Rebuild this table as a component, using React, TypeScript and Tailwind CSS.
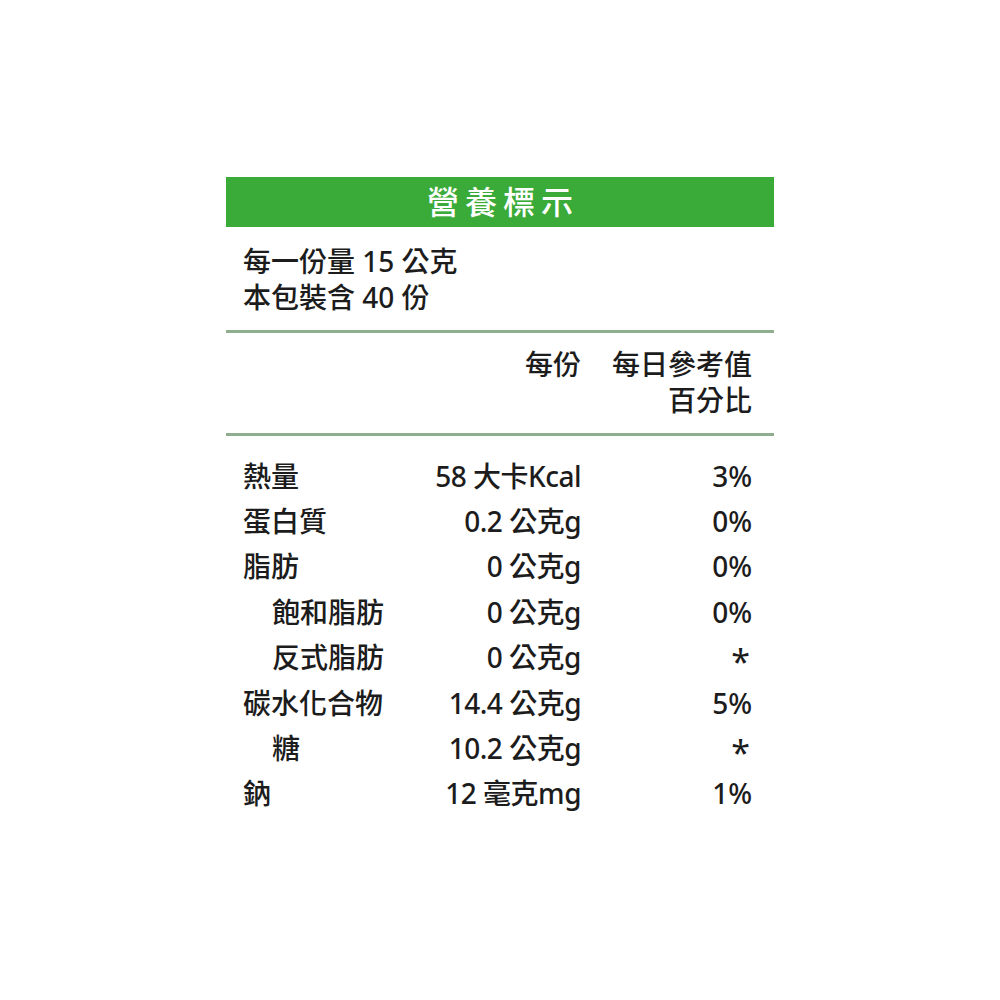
const rows = [
  { label: "熱量", value: "58 大卡Kcal", pct: "3%", indent: false },
  { label: "蛋白質", value: "0.2 公克g", pct: "0%", indent: false },
  { label: "脂肪", value: "0 公克g", pct: "0%", indent: false },
  { label: "飽和脂肪", value: "0 公克g", pct: "0%", indent: true },
  { label: "反式脂肪", value: "0 公克g", pct: "*", indent: true },
  { label: "碳水化合物", value: "14.4 公克g", pct: "5%", indent: false },
  { label: "糖", value: "10.2 公克g", pct: "*", indent: true },
  { label: "鈉", value: "12 毫克mg", pct: "1%", indent: false },
];

export default function App() {
  return (
    <div
      className="min-h-[1000px] w-full bg-white pt-[177px] text-[#1c1c1c]"
      style={{ fontFamily: '"Noto Sans", "Noto Sans CJK TC", sans-serif' }}
    >
      <div className="w-[548px] ml-[226px]">
        <div className="flex h-[50px] items-center justify-center bg-[#3aaa38] text-[32px] font-medium tracking-[6px] text-white pl-[6px]">
          營養標示
        </div>

        <div className="px-[17px] pt-[16px] pb-[15px] text-[28px] leading-[36px] font-medium">
          <div>每一份量 15 公克</div>
          <div>本包裝含 40 份</div>
        </div>
        <div className="h-[3px] bg-[#8fae8f]" />

        <div className="grid grid-cols-[170px_168px_171px] pl-[17px] pt-[13px] pb-[15px] text-[28px] leading-[36px] font-medium">
          <div />
          <div className="text-right">每份</div>
          <div className="text-right">
            每日參考值
            <br />
            百分比
          </div>
        </div>
        <div className="h-[3px] bg-[#8fae8f]" />

        <div className="pl-[17px] pt-[17px] pb-[10px] text-[28px] font-medium">
          {rows.map((r) => (
            <div
              key={r.label}
              className="grid h-[45.4px] grid-cols-[170px_168px_171px] items-center"
            >
              <div className={r.indent ? "pl-[29px] whitespace-nowrap" : "whitespace-nowrap"}>{r.label}</div>
              <div className="text-right whitespace-nowrap tracking-[-0.5px]">{r.value}</div>
              {r.pct === "*" ? (
                <div className="flex h-[30px] items-center justify-end overflow-visible">
                  <span className="block h-[30px] text-[34px] font-normal leading-[30px] translate-y-[4px] pr-[2px]">*</span>
                </div>
              ) : (
                <div className="text-right">{r.pct}</div>
              )}
            </div>
          ))}
        </div>
      </div>
    </div>
  );
}
